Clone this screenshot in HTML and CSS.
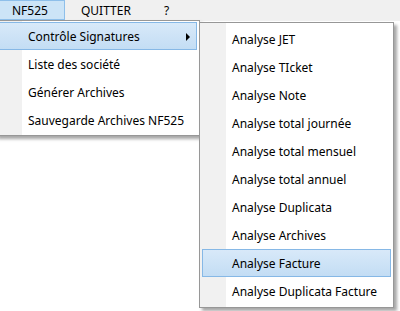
FILE: index.html
```html
<!DOCTYPE html>
<html lang="fr">
<head>
    <meta charset="UTF-8">
    <title>NF525</title>
    <link rel="stylesheet" href="styles.css">
</head>
<body>
    <div class="menubar">
        <div class="bar-item open">
            NF525
            <div class="menu main">
                <div class="item active">
                    Contrôle Signatures
                    <span class="arrow"></span>
                </div>
                <div class="item">Liste des société</div>
                <div class="item">Générer Archives</div>
                <div class="item">Sauvegarde Archives NF525</div>

                <div class="menu sub">
                    <div class="item">Analyse JET</div>
                    <div class="item">Analyse TIcket</div>
                    <div class="item">Analyse Note</div>
                    <div class="item">Analyse total journée</div>
                    <div class="item">Analyse total mensuel</div>
                    <div class="item">Analyse total annuel</div>
                    <div class="item">Analyse Duplicata</div>
                    <div class="item">Analyse Archives</div>
                    <div class="item active">Analyse Facture</div>
                    <div class="item">Analyse Duplicata Facture</div>
                </div>
            </div>
        </div>
        <div class="bar-item">QUITTER</div>
        <div class="bar-item">?</div>
    </div>
</body>
</html>
```

FILE: styles.css
```css
html, body {
    height: 100%;
}

body {
    margin: 0;
    background-color: #fff;
    font-family: 'Segoe UI', 'Noto Sans', sans-serif;
    font-size: 12px;
    color: #000;
}

.menubar {
    display: flex;
    height: 21px;
    margin-left: -4px;
    background-color: #f0f0f0;
}

.bar-item {
    position: relative;
    height: 20px;
    line-height: 20px;
    padding: 0 16px;
    box-sizing: border-box;
    border: 1px solid transparent;
    border-left: 0;
}

.bar-item.open {
    background-color: #cce4f7;
    border-color: #8ebfea;
}

.menu {
    position: absolute;
    z-index: 10;
    box-sizing: border-box;
    border: 1px solid #979797;
    padding: 1px 2px;
    background: linear-gradient(to right, #f1f1f1 26px, #fff 26px);
    box-shadow: 3px 3px 3px rgba(0, 0, 0, 0.35);
}

.main {
    top: 19px;
    left: -1px;
    width: 205px;
    height: 116px;
}

.sub {
    top: 1px;
    left: 203px;
    width: 195px;
    height: 286px;
    padding: 2px;
}

.item {
    position: relative;
    display: flex;
    align-items: center;
    height: 28px;
    padding: 2px 0 0 29px;
    box-sizing: border-box;
    border: 1px solid transparent;
    line-height: 16px;
    white-space: nowrap;
}

.item.active {
    background: linear-gradient(#d8e9f9, #c3ddf4);
    border-color: #86b8e6;
}

.arrow {
    position: absolute;
    right: 6px;
    top: 10px;
    width: 0;
    height: 0;
    border-top: 4px solid transparent;
    border-bottom: 4px solid transparent;
    border-left: 4px solid #000;
}
```
